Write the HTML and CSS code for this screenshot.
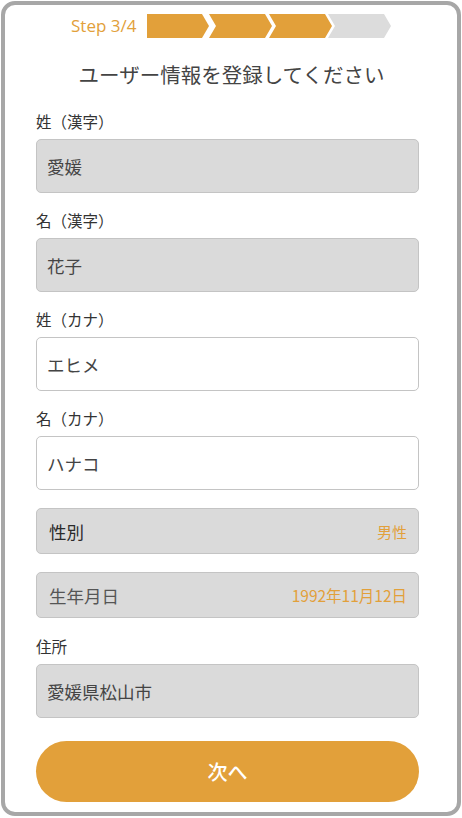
FILE: index.html
```html
<!DOCTYPE html>
<html lang="ja">
<head>
<meta charset="utf-8">
<link rel="stylesheet" href="styles.css">
</head>
<body>
<div class="frame">
  <div class="steps">
    <span class="step-text">Step 3/4</span>
    <svg class="chevrons" width="245" height="24" viewBox="0 0 245 24">
      <polygon points="0,0 55,0 62,12 55,24 0,24" fill="#e2a03a"/>
      <polygon points="62,0 118,0 125,12 118,24 62,24 69,12" fill="#e2a03a"/>
      <polygon points="122,0 178,0 185,12 178,24 122,24 129,12" fill="#e2a03a"/>
      <polygon points="181,0 237,0 244,12 237,24 181,24 188,12" fill="#dcdcdc"/>
    </svg>
  </div>
  <h1 class="title">ユーザー情報を登録してください</h1>

  <div class="field first">
    <div class="label">姓（漢字）</div>
    <div class="input filled">愛媛</div>
  </div>
  <div class="field">
    <div class="label">名（漢字）</div>
    <div class="input filled">花子</div>
  </div>
  <div class="field">
    <div class="label">姓（カナ）</div>
    <div class="input">エヒメ</div>
  </div>
  <div class="field">
    <div class="label">名（カナ）</div>
    <div class="input">ハナコ</div>
  </div>

  <div class="row">
    <span class="row-name dark">性別</span>
    <span class="row-value">男性</span>
  </div>
  <div class="row">
    <span class="row-name">生年月日</span>
    <span class="row-value small">1992年11月12日</span>
  </div>

  <div class="field addr">
    <div class="label">住所</div>
    <div class="input filled">愛媛県松山市</div>
  </div>

  <button class="next">次へ</button>
</div>
</body>
</html>
```

FILE: styles.css
```css
html, body {
  margin: 0;
  padding: 0;
  background: #ffffff;
}
body {
  font-family: "Noto Sans CJK JP", "Noto Sans", sans-serif;
  color: #333;
}
.frame {
  box-sizing: border-box;
  width: 460px;
  height: 815px;
  margin: 1px 0 0 1px;
  border: 4px solid #a7a7a7;
  border-radius: 14px;
  padding: 9px 38px 0 31px;
  display: flex;
  flex-direction: column;
}
.steps {
  display: flex;
  align-items: center;
  height: 24px;
  padding-left: 35px;
  gap: 11px;
}
.step-text {
  font-family: "Open Sans", "Noto Sans", sans-serif;
  font-size: 17px;
  color: #e2a03a;
  line-height: 24px;
}
.chevrons {
  display: block;
}
.title {
  margin: 22px 0 0 0;
  font-size: 20.5px;
  font-weight: 400;
  line-height: 28px;
  color: #444;
  text-align: center;
  padding-left: 8px;
  white-space: nowrap;
}
.field {
  margin-top: 16px;
  display: flex;
  flex-direction: column;
}
.field.first {
  margin-top: 22px;
}
.field.addr {
  margin-top: 17px;
}
.label {
  font-size: 15.5px;
  line-height: 22px;
  margin-bottom: 7px;
  color: #333;
}
.input {
  box-sizing: border-box;
  height: 54px;
  border: 1px solid #c4c4c4;
  border-radius: 5px;
  background: #fff;
  padding-left: 10px;
  display: flex;
  align-items: center;
  font-size: 17.5px;
  color: #444;
}
.input.filled {
  background: #dadada;
}
.row {
  box-sizing: border-box;
  height: 46px;
  margin-top: 18px;
  border: 1px solid #c4c4c4;
  border-radius: 5px;
  background: #dadada;
  display: flex;
  align-items: center;
  justify-content: space-between;
  padding: 0 11px 0 12px;
}
.row-name {
  font-size: 17.5px;
  color: #555;
}
.row-name.dark {
  color: #2a2a2a;
}
.row-value {
  font-size: 15px;
  color: #e2a03a;
}
.row-value.small {
  font-size: 15.5px;
}
.next {
  margin-top: 23px;
  height: 61px;
  border: none;
  border-radius: 31px;
  background: #e2a03a;
  color: #fff;
  font-family: "Noto Sans CJK JP", "Noto Sans", sans-serif;
  font-size: 20px;
  font-weight: 500;
  padding: 0;
}
```
